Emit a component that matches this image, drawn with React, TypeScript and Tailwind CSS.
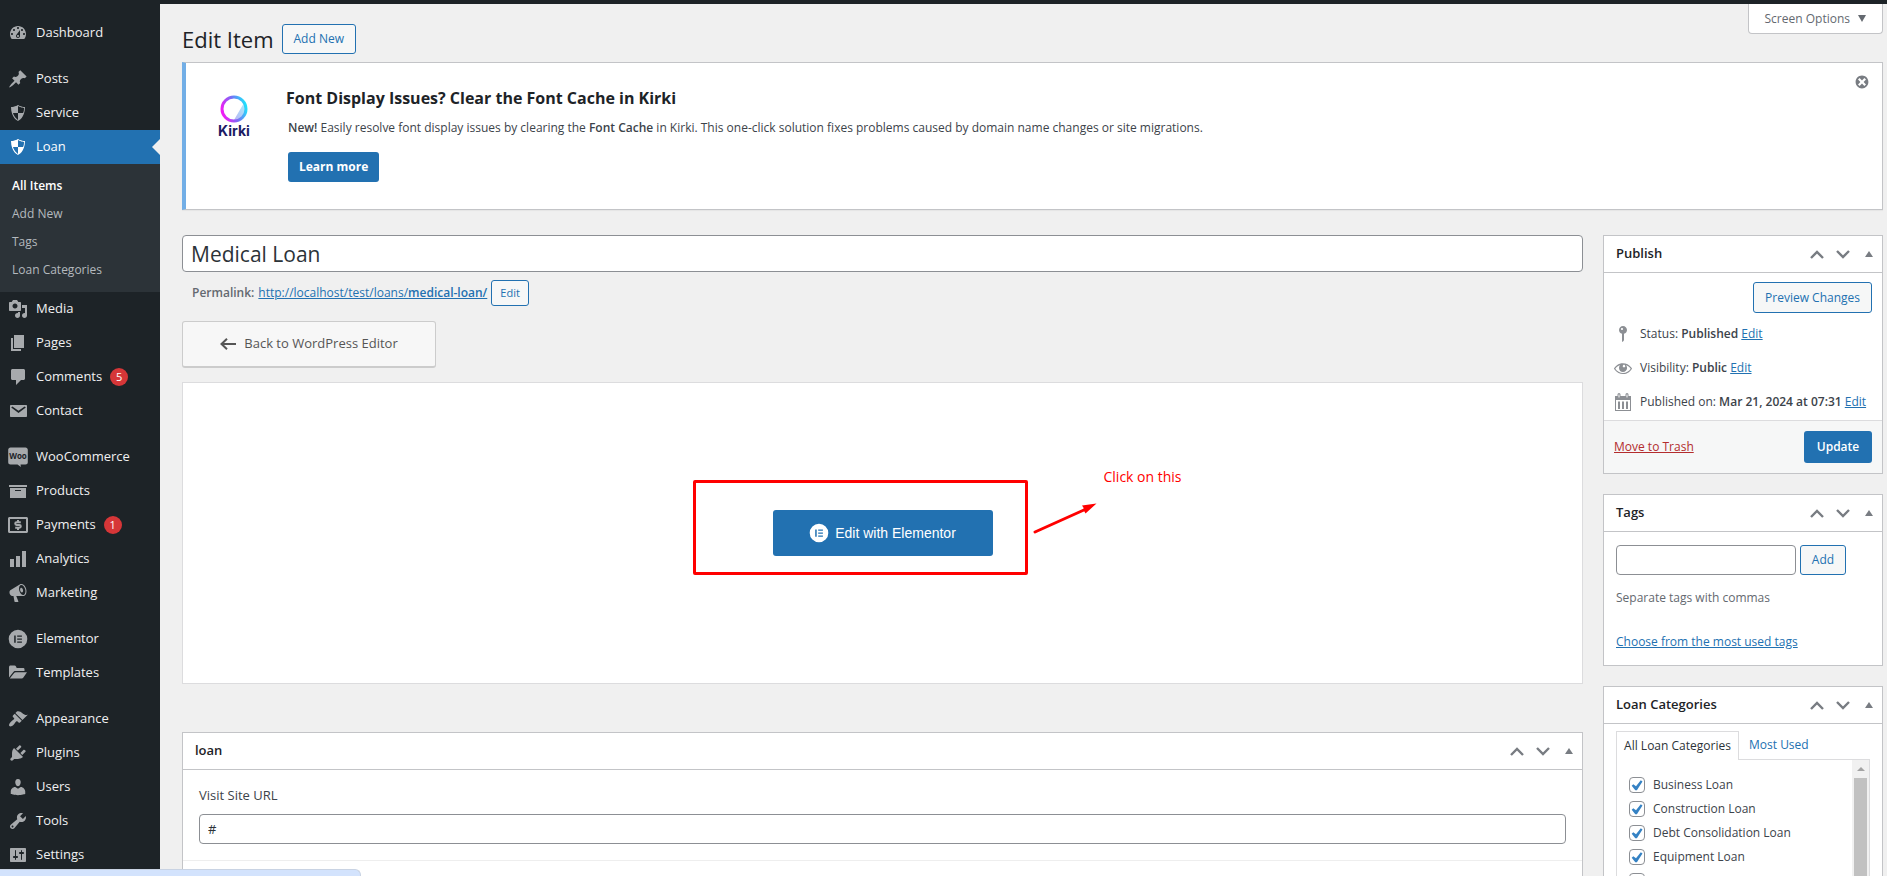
import type { ReactNode } from "react";
import { clsx } from "clsx";

type MenuItem = {
  label: string;
  icon: ReactNode;
  count?: number;
  gap?: boolean;
  current?: boolean;
};

const Icon = ({ d, children }: { d?: string; children?: ReactNode }) => (
  <svg viewBox="0 0 20 20" className="size-5 shrink-0" fill="currentColor" aria-hidden>
    {d && <path fillRule="evenodd" d={d} />}
    {children}
  </svg>
);

const SHIELD =
  "M10 2s3 2 7 2c0 11-7 14-7 14S3 15 3 4c4 0 7-2 7-2zm0 8h5s1-1 1-5c0 0-5-1-6-2v7H5c1 4 5 7 5 7v-7z";

const ElementorMark = () => (
  <svg viewBox="0 0 20 20" className="size-5 shrink-0" fill="currentColor" aria-hidden>
    <path
      fillRule="evenodd"
      d="M10 .7a9.3 9.3 0 1 1 0 18.6A9.3 9.3 0 0 1 10 .7zM6.2 6.4v7.4h1.5V6.4zm3 0v1.4h4.7V6.4zm0 3v1.4h4.7V9.4zm0 3v1.4h4.7v-1.4z"
    />
  </svg>
);

const MENU_TOP: MenuItem[] = [
  {
    label: "Dashboard",
    icon: (
      <Icon d="M3.76 16h12.48c1.1-1.37 1.76-3.11 1.76-5 0-4.42-3.58-8-8-8s-8 3.58-8 8c0 1.89.66 3.63 1.76 5zM10 4c.55 0 1 .45 1 1s-.45 1-1 1-1-.45-1-1 .45-1 1-1zM6 6c.55 0 1 .45 1 1s-.45 1-1 1-1-.45-1-1 .45-1 1-1zm8 0c.55 0 1 .45 1 1s-.45 1-1 1-1-.45-1-1 .45-1 1-1zm-5.37 5.55L12 7v6c0 1.1-.9 2-2 2s-2-.9-2-2c0-.57.24-1.08.63-1.45zM4 10c.55 0 1 .45 1 1s-.45 1-1 1-1-.45-1-1 .45-1 1-1zm12 0c.55 0 1 .45 1 1s-.45 1-1 1-1-.45-1-1 .45-1 1-1zm-5 3c0-.55-.45-1-1-1s-1 .45-1 1 .45 1 1 1 1-.45 1-1z" />
    ),
  },
  {
    label: "Posts",
    gap: true,
    icon: (
      <Icon d="M10.44 3.02l1.82-1.82 6.36 6.35-1.83 1.82c-1.05-.68-2.48-.57-3.41.36l-.75.75c-.92.93-1.04 2.35-.35 3.41l-1.83 1.82-2.41-2.41-2.8 2.79c-.42.42-3.38 2.71-3.8 2.29s1.86-3.39 2.28-3.81l2.79-2.79L4.1 9.36l1.83-1.82c1.05.69 2.48.57 3.4-.36l.75-.75c.93-.92 1.05-2.35.36-3.41z" />
    ),
  },
  { label: "Service", icon: <Icon d={SHIELD} /> },
  { label: "Loan", current: true, icon: <Icon d={SHIELD} /> },
];

const SUBMENU = ["All Items", "Add New", "Tags", "Loan Categories"];

const MENU_BOTTOM: MenuItem[] = [
  {
    label: "Media",
    icon: (
      <Icon d="M13 11V4c0-.55-.45-1-1-1h-1.67L9 1H5L3.67 3H2c-.55 0-1 .45-1 1v7c0 .55.45 1 1 1h10c.55 0 1-.45 1-1zM7 4.5c1.38 0 2.5 1.12 2.5 2.5S8.38 9.5 7 9.5 4.5 8.38 4.5 7 5.62 4.5 7 4.5zM14 6h5v10.5c0 1.38-1.12 2.5-2.5 2.5S14 17.88 14 16.5s1.12-2.5 2.5-2.5c.17 0 .34.02.5.05V9h-3V6zm-4 8.05V13h2v3.5c0 1.38-1.12 2.5-2.5 2.5S7 17.88 7 16.5 8.12 14 9.5 14c.17 0 .34.02.5.05z" />
    ),
  },
  { label: "Pages", icon: <Icon d="M6 15V2h10v13H6zm-1 1h8v2H3V5h2v11z" /> },
  {
    label: "Comments",
    count: 5,
    icon: (
      <Icon d="M4.5 2h11c.8 0 1.5.7 1.5 1.5v8c0 .8-.7 1.5-1.5 1.5H13l-5 5v-5H4.5c-.8 0-1.5-.7-1.5-1.5v-8C3 2.7 3.7 2 4.5 2z" />
    ),
  },
  {
    label: "Contact",
    icon: (
      <Icon d="M3 4h15c.6 0 1 .4 1 1v10c0 .6-.4 1-1 1H3c-.6 0-1-.4-1-1V5c0-.6.4-1 1-1zm7.5 8L17.8 6.6 16.6 5.4 10.5 9.8 4.4 5.4 3.2 6.6z" />
    ),
  },
  {
    label: "WooCommerce",
    gap: true,
    icon: (
      <Icon d="M2.5.5h15c1.300 0 2.300 1 2.300 2.300v12.500c0 1.300-1 2.300-2.300 2.300h-5l.4 2.400-3.400-2.400h-7C1.200 17.600.2 16.600.2 15.300V2.800C.2 1.500 1.200.5 2.500.5z">
        <text
          x="10"
          y="11.500"
          textAnchor="middle"
          fontSize="8"
          fontWeight="700"
          fill="#1d2327"
          fontFamily="Open Sans, sans-serif"
        >
          Woo
        </text>
      </Icon>
    ),
  },
  { label: "Products", icon: <Icon d="M19 4v2H1V4h18zM2 7h16v10H2V7zm11 3V9H7v1h6z" /> },
  {
    label: "Payments",
    count: 1,
    icon: (
      <Icon d="M1.500 2h17c.8 0 1.500.7 1.500 1.500v13c0 .8-.7 1.500-1.500 1.500h-17C.7 18 0 17.300 0 16.500v-13C0 2.700.7 2 1.500 2zM2 4v12h16V4z">
        <path
          d="M12.800 7.200H8.600a1.200 1.200 0 0 0 0 2.700h2.800a1.300 1.300 0 0 1 0 2.800H7.200M10 5v2M10 13v2"
          fill="none"
          stroke="currentColor"
          strokeWidth="2"
        />
      </Icon>
    ),
  },
  { label: "Analytics", icon: <Icon d="M18 18V2h-4v16h4zm-6 0V7H8v11h4zm-6 0v-8H2v8h4z" /> },
  {
    label: "Marketing",
    icon: (
      <Icon d="M18.15 5.94c.46 1.62.38 3.22-.02 4.48-.42 1.28-1.26 2.18-2.3 2.48-.16.06-.26.06-.4.06-.06.02-.12.02-.18.02-.06.02-.14.02-.22.02h-6.8l2.22 5.5c.02.14-.06.26-.14.34-.08.1-.24.16-.34.16H6.95c-.1 0-.26-.06-.34-.16-.08-.08-.16-.2-.14-.34l-1-5.5H4.25l-.02-.02c-.5.06-1.08-.18-1.54-.62s-.88-1.08-1.06-1.88c-.24-.8-.2-1.56-.02-2.2.18-.62.58-1.08 1.06-1.3l.02-.02 9-5.4c.1-.06.18-.1.24-.16.06-.04.14-.08.24-.12.16-.08.28-.12.5-.18 1.04-.3 2.24.1 3.22.98s1.84 2.24 2.26 3.86zm-2.58 5.98h-.02c.4-.1.74-.34 1.04-.7.58-.7.86-1.76.86-3.04 0-.64-.1-1.3-.28-1.98-.34-1.36-1.02-2.5-1.78-3.24s-1.68-1.1-2.46-.88c-.82.22-1.4.96-1.7 2-.32 1.04-.28 2.36.06 3.72.38 1.36 1 2.5 1.8 3.24.78.74 1.62 1.1 2.48.88zm-2.54-7.08c.22-.04.42-.02.62.04.38.16.76.48 1.02 1s.42 1.2.42 1.78c0 .3-.04.56-.12.8-.18.48-.44.84-.86.94-.34.1-.8-.06-1.14-.4s-.64-.86-.78-1.5c-.18-.62-.12-1.24.02-1.72s.48-.84.82-.94z" />
    ),
  },
  { label: "Elementor", gap: true, icon: <ElementorMark /> },
  {
    label: "Templates",
    icon: (
      <Icon d="M1 4.200C1 3 1.700 2.500 2.500 2.500h4c.7 0 1.200.4 1.500 1l.7 1.500H15c.8 0 1.500.5 1.500 1.300V8H7.500c-1 0-1.800.4-2.300 1.300L1 14.500zM1.800 15.500l4.300-5.400c.4-.6 1-.9 1.700-.9H19l-3.600 5.300c-.4.6-1 1-1.800 1z" />
    ),
  },
  {
    label: "Appearance",
    gap: true,
    icon: (
      <Icon d="M14.48 11.06L7.41 3.99l1.5-1.5c.5-.56 2.3-.47 3.51.32 1.21.8 1.43 1.28 2.91 2.1 1.18.64 2.45 1.26 4.45.85zm-.71.71L6.7 4.7 4.93 6.47c-.39.39-.39 1.02 0 1.41l1.06 1.06c.39.39.39 1.03 0 1.42-.6.6-1.43 1.11-2.21 1.69-.35.26-.7.53-1.01.84C1.43 14.23.4 16.08 1.4 17.07c.99 1 2.84-.03 4.18-1.36.31-.31.58-.66.85-1.02.57-.78 1.08-1.61 1.69-2.21.39-.39 1.02-.39 1.41 0l1.06 1.06c.39.39 1.02.39 1.41 0z" />
    ),
  },
  {
    label: "Plugins",
    icon: (
      <Icon d="M13.11 4.36L9.87 7.6 8 5.73l3.24-3.24c.35-.34 1.05-.2 1.56.32.52.51.66 1.21.31 1.55zm-8 1.77l.91-1.12 9.01 9.01-1.19.84c-.71.71-2.63 1.16-3.82 1.16H6.14L4.9 17.26c-.59.59-1.54.59-2.12 0-.59-.58-.59-1.53 0-2.12l1.24-1.24v-3.88c0-1.13.4-3.19 1.09-3.89zm7.26 3.97l3.24-3.24c.34-.35 1.04-.21 1.55.31.52.51.66 1.21.31 1.55l-3.24 3.25z" />
    ),
  },
  {
    label: "Users",
    icon: (
      <Icon d="M10 9.25c-2.27 0-2.73-3.44-2.73-3.44C7 4.02 7.82 2 9.97 2c2.16 0 2.98 2.02 2.71 3.81 0 0-.41 3.44-2.68 3.44zm0 2.57L12.72 10c2.39 0 4.52 2.33 4.52 4.53v2.49s-3.65 1.13-7.24 1.13c-3.65 0-7.24-1.13-7.24-1.13v-2.49c0-2.25 1.94-4.48 4.47-4.48z" />
    ),
  },
  {
    label: "Tools",
    icon: (
      <Icon d="M16.68 9.77c-1.34 1.34-3.3 1.67-4.95.99l-5.41 6.52c-.99.99-2.59.99-3.58 0s-.99-2.59 0-3.57l6.52-5.42c-.68-1.65-.35-3.61.99-4.95 1.28-1.28 3.12-1.62 4.72-1.06l-2.89 2.89 2.82 2.82 2.86-2.87c.53 1.58.18 3.39-1.08 4.65zM3.81 16.21c.4.39 1.04.39 1.43 0 .4-.4.4-1.04 0-1.43-.39-.4-1.03-.4-1.43 0-.39.39-.39 1.03 0 1.43z" />
    ),
  },
  {
    label: "Settings",
    icon: (
      <Icon d="M18 16V4c0-.55-.45-1-1-1H3c-.55 0-1 .45-1 1v12c0 .55.45 1 1 1h14c.55 0 1-.45 1-1zM8 11h1c.55 0 1 .45 1 1s-.45 1-1 1H8v1.5c0 .28-.22.5-.5.5s-.5-.22-.5-.5V13H6c-.55 0-1-.45-1-1s.45-1 1-1h1V5.5c0-.28.22-.5.5-.5s.5.22.5.5V11zm5-2h-1c-.55 0-1-.45-1-1s.45-1 1-1h1V5.5c0-.28.22-.5.5-.5s.5.22.5.5V7h1c.55 0 1 .45 1 1s-.45 1-1 1h-1v5.5c0 .28-.22.5-.5.5s-.5-.22-.5-.5V9z" />
    ),
  },
];

const CATEGORIES = [
  "Business Loan",
  "Construction Loan",
  "Debt Consolidation Loan",
  "Equipment Loan",
  "Home Equity Loan",
];

const OUTLINE_BUTTON =
  "rounded-[3px] border border-[#2271b1] bg-[#f6f7f7] text-[#2271b1]";
const LINK = "text-[#2271b1] underline";

const MenuLink = ({ item }: { item: MenuItem }) => (
  <li className={clsx(item.gap && "mt-3")}>
    <a
      href="#"
      className={clsx(
        "relative flex h-[34px] items-center gap-2 pl-2 text-[13px]",
        item.current ? "bg-[#2271b1] text-white" : "text-[#f0f0f1]",
      )}
    >
      <span className={item.current ? "text-white" : "text-[#a7aaad]"}>{item.icon}</span>
      {item.label}
      {item.count && (
        <span className="flex size-[18px] items-center justify-center rounded-full bg-[#d63638] text-[11px] text-white">
          {item.count}
        </span>
      )}
      {item.current && (
        <span className="absolute top-[9px] right-0 border-y-8 border-r-8 border-y-transparent border-r-[#f0f0f0]" />
      )}
    </a>
  </li>
);

const Sidebar = () => (
  <nav className="w-40 shrink-0 bg-[#1d2327] pt-4" aria-label="Main menu">
    <ul>
      {MENU_TOP.map((item) => (
        <MenuLink key={item.label} item={item} />
      ))}
    </ul>
    <ul className="bg-[#2c3338] py-2">
      {SUBMENU.map((label, i) => (
        <li key={label}>
          <a
            href="#"
            className={clsx(
              "flex h-7 items-center pl-3",
              i === 0 ? "font-semibold text-white" : "text-[#b4b9be]",
            )}
          >
            {label}
          </a>
        </li>
      ))}
    </ul>
    <ul>
      {MENU_BOTTOM.map((item) => (
        <MenuLink key={item.label} item={item} />
      ))}
    </ul>
  </nav>
);

const PanelHeader = ({ title }: { title: string }) => (
  <div className="flex h-[37px] items-center border-b border-[#c3c4c7] pl-3 text-[#787c82]">
    <h2 className="grow text-[13px] font-semibold text-[#1d2327]">{title}</h2>
    <button type="button" aria-label={`Move ${title} up`} className="flex w-[26px] justify-center">
      <svg viewBox="0 0 14 9" className="h-[9px] w-3.5" fill="none" stroke="currentColor" strokeWidth="2.400" aria-hidden>
        <path d="M1 8l6-6 6 6" />
      </svg>
    </button>
    <button type="button" aria-label={`Move ${title} down`} className="flex w-[26px] justify-center">
      <svg viewBox="0 0 14 9" className="h-[9px] w-3.5" fill="none" stroke="currentColor" strokeWidth="2.400" aria-hidden>
        <path d="M1 1l6 6 6-6" />
      </svg>
    </button>
    <button type="button" aria-label={`Toggle ${title}`} className="flex w-[26px] justify-center">
      <svg viewBox="0 0 8 6" className="h-1.5 w-2" fill="currentColor" aria-hidden>
        <path d="M4 0l4 6H0z" />
      </svg>
    </button>
  </div>
);

const Notice = () => (
  <section className="flex h-[148px] border border-l-4 border-[#c3c4c7] border-l-[#72aee6] bg-white shadow-[0_1px_1px_rgba(0,0,0,0.04)]">
    <div className="flex w-24 shrink-0 flex-col items-center pt-8">
      <svg viewBox="0 0 28 28" className="size-7" aria-hidden>
        <defs>
          <linearGradient id="kirki-ring" x1="0" y1=".6" x2="1" y2=".3">
            <stop offset="0" stopColor="#f21bf5" />
            <stop offset=".5" stopColor="#7a6bf5" />
            <stop offset="1" stopColor="#1fe3fb" />
          </linearGradient>
          <linearGradient id="kirki-fill" x1="0" y1="1" x2="1" y2="0">
            <stop offset="0" stopColor="#b9b4f5" />
            <stop offset="1" stopColor="#a5f3fb" />
          </linearGradient>
        </defs>
        <path d="M14 25L24.500 7a12 12 0 0 1-10.500 18z" fill="url(#kirki-fill)" />
        <circle cx="14" cy="14" r="12" fill="none" stroke="url(#kirki-ring)" strokeWidth="3" />
      </svg>
      <span className="font-['Inter',sans-serif] text-sm leading-4 font-bold text-[#1b1b64]">
        Kirki
      </span>
    </div>
    <div className="ml-1 flex grow flex-col items-start pt-[23px]">
      <h2 className="text-base leading-6 font-bold text-[#1d2327]">
        Font Display Issues? Clear the Font Cache in Kirki
      </h2>
      <p className="mt-2 ml-0.5 leading-5">
        <strong className="font-semibold">New!</strong> Easily resolve font display issues by
        clearing the <strong className="font-semibold">Font Cache</strong> in Kirki. This one-click
        solution fixes problems caused by domain name changes or site migrations.
      </p>
      <button
        type="button"
        className="mt-3.5 ml-0.5 h-[30px] rounded-[3px] bg-[#2271b1] px-[11px] font-bold text-white"
      >
        Learn more
      </button>
    </div>
    <button type="button" aria-label="Dismiss" className="mt-[11px] mr-3 size-4 text-[#787c82]">
      <svg viewBox="0 0 20 20" className="size-4" fill="currentColor" aria-hidden>
        <path d="M10 2c4.420 0 8 3.580 8 8s-3.580 8-8 8-8-3.580-8-8 3.580-8 8-8zm5 11l-3-3 3-3-2-2-3 3-3-3-2 2 3 3-3 3 2 2 3-3 3 3z" />
      </svg>
    </button>
  </section>
);

const EditorPanel = () => (
  <section className="mt-3.5 flex h-[302px] items-center justify-center border border-[#dcdcde] bg-white">
    <div className="relative">
      <a
        href="#"
        className="flex h-[46px] w-[220px] items-center justify-center gap-1.5 rounded-[3px] bg-[#2271b1] font-['Liberation_Sans',sans-serif] text-sm text-white"
      >
        <ElementorMark />
        Edit with Elementor
      </a>
      {/* Hand-drawn callout laid over the panel */}
      <div className="pointer-events-none absolute -top-[30px] -right-[35px] -left-20 h-[95px] rounded-xs border-3 border-[#ff0000]" />
      <svg
        viewBox="0 0 64 32"
        className="pointer-events-none absolute -top-2 left-[260px] h-8 w-16"
        aria-hidden
      >
        <path d="M2 30L52 7.500" stroke="#ff0000" strokeWidth="3" strokeLinecap="round" />
        <path d="M63.500 1.500L49 3.500l2 3-1 .5 2.500 4.500z" fill="#ff0000" />
      </svg>
      <span className="pointer-events-none absolute -top-[43px] left-[331px] text-sm leading-5 whitespace-nowrap text-[#ff0000]">
        Click on this
      </span>
    </div>
  </section>
);

const PublishRow = ({ icon, label, value }: { icon: ReactNode; label: string; value: string }) => (
  <div className="flex h-[34px] items-center gap-[7px] whitespace-nowrap">
    <span className="text-[#8c8f94]">{icon}</span>
    <span>
      {label} <b className="font-semibold">{value}</b>{" "}
      <a href="#" className={LINK}>
        Edit
      </a>
    </span>
  </div>
);

const PublishPanel = () => (
  <section className="border border-[#c3c4c7] bg-white">
    <PanelHeader title="Publish" />
    <div className="flex justify-end pt-[9px] pr-2.5">
      <button type="button" className={clsx(OUTLINE_BUTTON, "h-[31px] px-[11px]")}>
        Preview Changes
      </button>
    </div>
    <div className="pt-1 pb-px pl-[9px]">
      <PublishRow
        label="Status:"
        value="Published"
        icon={
          <Icon d="M14 6c0 1.860-1.280 3.410-3 3.860V16c0 1-2 2-2 2V9.860c-1.720-.45-3-2-3-3.860 0-2.210 1.790-4 4-4s4 1.790 4 4zM8 5c0 .55.45 1 1 1s1-.45 1-1-.45-1-1-1-1 .45-1 1z" />
        }
      />
      <PublishRow
        label="Visibility:"
        value="Public"
        icon={
          <Icon d="M18.3 9.5C15 4.9 8.5 3.8 3.9 7.2c-1.2.9-2.2 2.1-3 3.4.2.4.5.8.8 1.2 3.3 4.6 9.6 5.6 14.2 2.4.9-.7 1.7-1.4 2.4-2.4.3-.4.5-.8.8-1.2-.3-.4-.5-.8-.8-1.1zm-8.2-2.3c.5-.5 1.3-.5 1.8 0s.5 1.3 0 1.8-1.3.5-1.8 0-.5-1.3 0-1.8zm-.1 7.700c-3.1 0-6-1.600-7.700-4.200C3.500 9 5.100 7.800 7 7.200c-.7.8-1 1.700-1 2.700 0 2.200 1.700 4.100 4 4.100 2.200 0 4.100-1.700 4.100-4v-.1c0-1-.4-2-1.100-2.700 1.900.6 3.500 1.800 4.700 3.500-1.700 2.600-4.600 4.200-7.700 4.200z" />
        }
      />
      <PublishRow
        label="Published on:"
        value="Mar 21, 2024 at 07:31"
        icon={
          <Icon d="M2 4h2.500V2.500a1.500 1.500 0 0 1 3 0V4h5V2.500a1.500 1.500 0 0 1 3 0V4H18v15H2zM5.500 2.500v3h1v-3zm8 0v3h1v-3zM3 8v10h14V8zM5 9.500h2V17H5zm4 0h2V17H9zm4 0h2V17h-2z" />
        }
      />
    </div>
    <div className="flex h-[53px] items-center justify-between border-t border-[#dcdcde] bg-[#f6f7f7] px-2.5">
      <a href="#" className="text-[#b32d2e] underline">
        Move to Trash
      </a>
      <button type="submit" className="h-8 w-[68px] rounded-[3px] bg-[#2271b1] font-semibold text-white">
        Update
      </button>
    </div>
  </section>
);

const TagsPanel = () => (
  <section className="border border-[#c3c4c7] bg-white">
    <PanelHeader title="Tags" />
    <div className="px-3 pt-[13px] pb-[13px]">
      <div className="flex gap-1">
        <input
          aria-label="Add tag"
          className="h-[30px] w-[180px] rounded-sm border border-[#8c8f94] px-2"
        />
        <button type="button" className={clsx(OUTLINE_BUTTON, "h-[30px] w-[46px]")}>
          Add
        </button>
      </div>
      <p className="mt-[13px] leading-5 text-[#646970]">Separate tags with commas</p>
      <p className="mt-6 leading-5">
        <a href="#" className={LINK}>
          Choose from the most used tags
        </a>
      </p>
    </div>
  </section>
);

const CategoriesPanel = () => (
  <section className="border border-[#c3c4c7] bg-white">
    <PanelHeader title="Loan Categories" />
    <div className="px-3 pt-[7px]">
      <div className="flex">
        <a
          href="#"
          className="z-10 -mb-px flex h-[29px] w-[123px] items-center justify-center border border-b-0 border-[#dcdcde] bg-white whitespace-nowrap text-[#2c3338]"
        >
          All Loan Categories
        </a>
        <a href="#" className="flex h-7 items-center pl-2.5 text-[#2271b1]">
          Most Used
        </a>
      </div>
      <div className="flex h-[200px] border border-[#dcdcde]">
        <ul className="grow pt-[13px] pl-3">
          {CATEGORIES.map((name) => (
            <li key={name} className="h-6">
              <label className="flex h-6 items-center gap-2">
                <span className="relative size-4">
                  <input
                    type="checkbox"
                    defaultChecked
                    className="peer block size-4 appearance-none rounded-sm border border-[#8c8f94] bg-white"
                  />
                  <svg
                    viewBox="0 0 16 16"
                    className="pointer-events-none absolute inset-0 hidden size-4 peer-checked:block"
                    fill="#3582c4"
                    aria-hidden
                  >
                    <path d="M11.800 3.200l1.700 1.200-5.600 8.800-1.600.1-3.600-4.500 1.600-1.500 2.700 2z" />
                  </svg>
                </span>
                {name}
              </label>
            </li>
          ))}
        </ul>
        <div className="flex w-[17px] flex-col items-center bg-[#f1f1f1]" aria-hidden>
          <svg viewBox="0 0 8 4" className="my-[7px] h-1 w-2 shrink-0" fill="#a3a3a3">
            <path d="M4 0l4 4H0z" />
          </svg>
          <div className="w-[13px] grow bg-[#c1c1c1]" />
        </div>
      </div>
    </div>
  </section>
);

const FieldsPanel = () => (
  <section className="mt-12 border border-[#c3c4c7] bg-white">
    <PanelHeader title="loan" />
    <div className="border-b border-[#eeeeee] px-4 pt-[15px] pb-4">
      <label htmlFor="site-url" className="block text-[13px] leading-5">
        Visit Site URL
      </label>
      <input
        id="site-url"
        defaultValue="#"
        className="mt-[9px] block h-[30px] w-full rounded-sm border border-[#8c8f94] px-2 text-[13px] text-[#2c3338]"
      />
    </div>
    <div className="h-20" />
  </section>
);

const App = () => (
  <div className="flex h-screen flex-col overflow-hidden bg-[#f0f0f0] font-['Open_Sans','Noto_Sans',sans-serif] text-xs text-[#3c434a]">
    <div className="flex min-h-0 grow">
      <Sidebar />
      <main className="min-w-0 grow border-t-4 border-[#1d2327] pr-1 pl-[22px]">
        <header className="flex h-[58px] items-start justify-between">
          <div className="flex items-center gap-2 pt-5">
            <h1 className="text-[22px] leading-7 text-[#1d2327]">Edit Item</h1>
            <a href="#" className={clsx(OUTLINE_BUTTON, "flex h-[30px] items-center px-[11px]")}>
              Add New
            </a>
          </div>
          <button
            type="button"
            className="flex h-[30px] items-center gap-2 rounded-b-sm border border-t-0 border-[#c3c4c7] bg-white px-4 text-[#646970]"
          >
            Screen Options
            <svg viewBox="0 0 8 7" className="h-[7px] w-2" fill="currentColor" aria-hidden>
              <path d="M0 0h8L4 7z" />
            </svg>
          </button>
        </header>
        <Notice />
        <div className="mt-[25px] flex gap-5">
          <div className="min-w-0 grow">
            <input
              aria-label="Title"
              defaultValue="Medical Loan"
              className="block h-[37px] w-full rounded-sm border border-[#8c8f94] bg-white px-2 text-[21px] text-[#2c3338]"
            />
            <div className="mt-2 flex items-center gap-1 pl-2.5">
              <span className="font-semibold text-[#646970]">Permalink:</span>
              <a href="#" className={LINK}>
                http://localhost/test/loans/<b className="font-semibold">medical-loan/</b>
              </a>
              <button type="button" className={clsx(OUTLINE_BUTTON, "h-[26px] px-2 text-[11px]")}>
                Edit
              </button>
            </div>
            <button
              type="button"
              className="mt-[15px] flex h-[47px] w-[254px] items-center justify-center gap-2 rounded-[3px] border border-b-2 border-[#cccccc] bg-[#f7f7f7] text-[13px] text-[#555555]"
            >
              <svg viewBox="0 0 16 12" className="h-3 w-4" fill="none" stroke="currentColor" strokeWidth="2" aria-hidden>
                <path d="M16 6H2M7 .800L1.500 6 7 11.200" />
              </svg>
              Back to WordPress Editor
            </button>
            <EditorPanel />
            <FieldsPanel />
          </div>
          <aside className="flex w-[280px] shrink-0 flex-col gap-5">
            <PublishPanel />
            <TagsPanel />
            <CategoriesPanel />
          </aside>
        </div>
      </main>
    </div>
    {/* Browser's link status bubble */}
    <div className="fixed bottom-0 left-0 h-[7px] w-[361px] rounded-tr-md border-t border-r border-[#c9d3e3] bg-[#d3e3fd]" />
  </div>
);

export default App;
